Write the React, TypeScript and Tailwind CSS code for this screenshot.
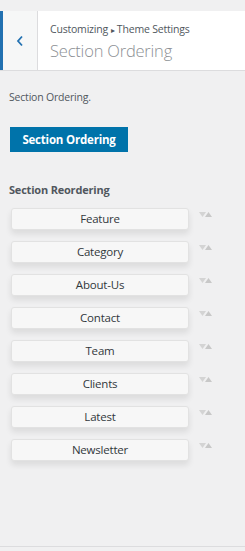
const sections = ["Feature", "Category", "About-Us", "Contact", "Team", "Clients", "Latest", "Newsletter"];

export default function App() {
  return (
    <div className="w-[245px] h-[551px] bg-[#f0f0f1] flex flex-col font-['Open_Sans',sans-serif] text-[#50575e]">
      <div className="mt-[11px] h-[60px] flex bg-white border-b border-[#dcdcde]">
        <button className="w-[38px] h-full bg-[#f6f7f7] border-l-[3px] border-[#2271b1] border-r border-r-[#dcdcde] flex items-center justify-center">
          <svg width="8" height="12" viewBox="0 0 8 12">
            <path d="M6 1.5 L2 6 L6 10.5" fill="none" stroke="#2271b1" strokeWidth="1.8" />
          </svg>
        </button>
        <div className="flex-1 pl-[12px] pt-[10px]">
          <div className="text-[10.5px] leading-[16px] tracking-[-0.2px] text-[#50575e]">
            Customizing <span className="text-[8px]">▸</span> Theme Settings
          </div>
          <div className="mt-[2px] text-[16.5px] leading-[22px] font-light text-[#8c8f94] tracking-[-0.2px]">Section Ordering</div>
        </div>
      </div>
      <div className="px-[9px] flex-1 border-b border-[#dcdcde] mb-[4px]">
        <p className="mt-[19px] text-[10.5px] leading-[14px] tracking-[-0.2px]">Section Ordering.</p>
        <button className="mt-[23px] ml-px w-[118px] h-[25px] bg-[#0073aa] text-white text-[11.5px] font-bold tracking-[-0.2px]">
          Section Ordering
        </button>
        <h3 className="mt-[31px] text-[11px] font-bold tracking-[-0.2px] leading-[14px]">Section Reordering</h3>
        <ul className="mt-[11px] flex flex-col gap-[11px]">
          {sections.map((s) => (
            <li key={s} className="flex items-start">
              <div className="ml-[2px] w-[178px] h-[22px] rounded-[3px] bg-[#f7f7f7] border border-[#e2e2e2] shadow-[0_4px_6px_rgba(0,0,0,0.09)] flex items-center justify-center text-[11.5px] text-[#32373c] tracking-[-0.2px]">
                {s}
              </div>
              <svg className="ml-[10px] mt-[4px]" width="14" height="5" viewBox="0 0 14 5">
                <path d="M0 0 L7 0 L3.5 5 Z" fill="#d4d4d4" />
                <path d="M6 5 L9.5 0 L13 5 Z" fill="#c8c8c8" />
              </svg>
            </li>
          ))}
        </ul>
      </div>
    </div>
  );
}
